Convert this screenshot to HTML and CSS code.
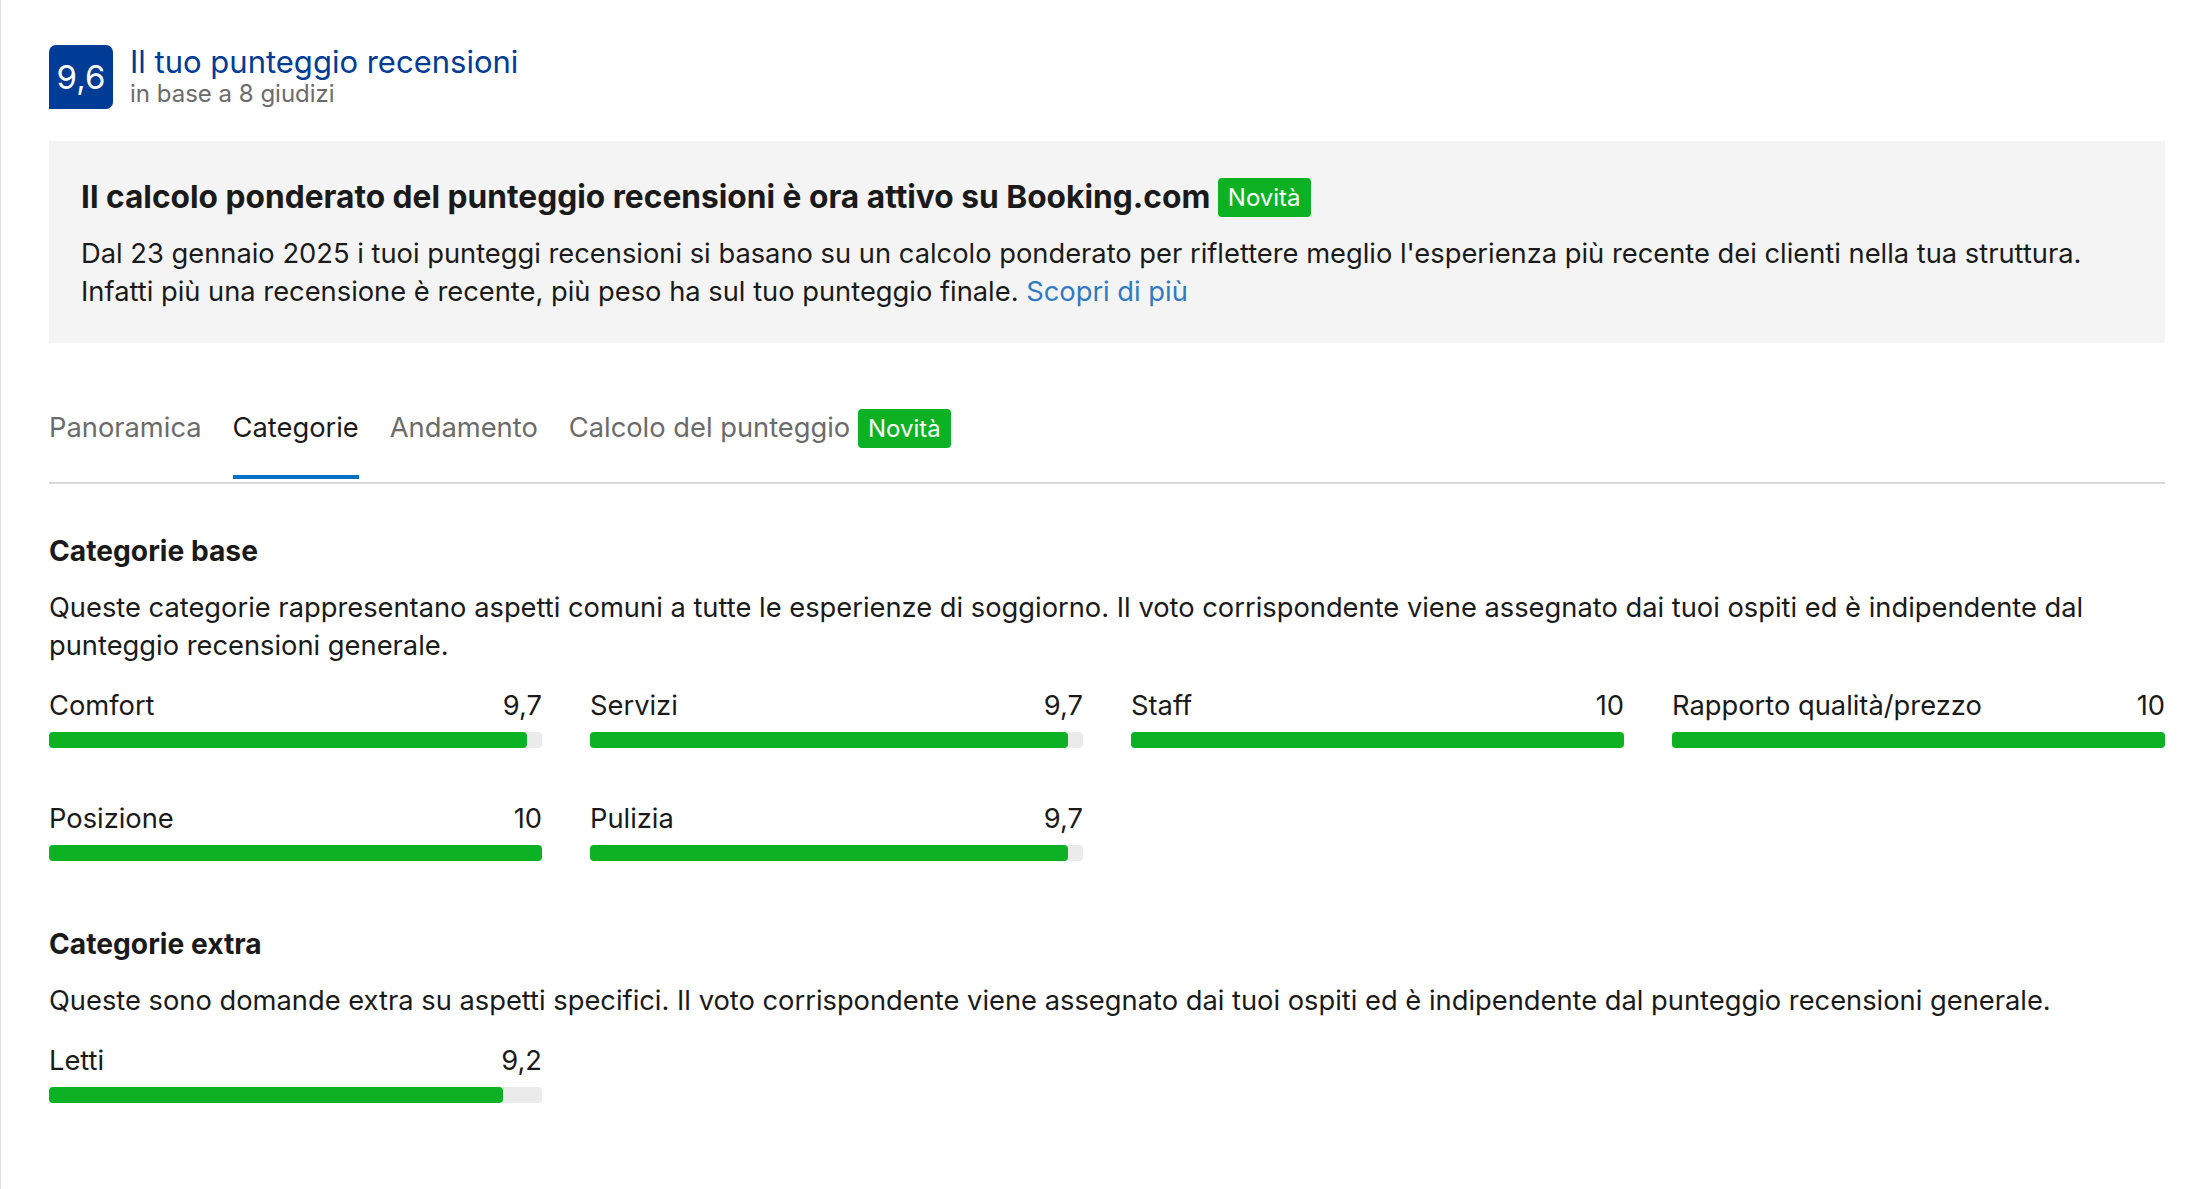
FILE: index.html
```html
<!DOCTYPE html>
<html lang="it">
<head>
    <meta charset="UTF-8">
    <title>Punteggio recensioni</title>
    <link rel="stylesheet" href="styles.css">
</head>
<body>
    <div class="page">
        <div class="score-header">
            <div class="score-badge">9,6</div>
            <div>
                <div class="score-title">Il tuo punteggio recensioni</div>
                <div class="score-sub">in base a 8 giudizi</div>
            </div>
        </div>

        <div class="notice">
            <h3>Il calcolo ponderato del punteggio recensioni è ora attivo su Booking.com <span class="tag">Novità</span></h3>
            <p>Dal 23 gennaio 2025 i tuoi punteggi recensioni si basano su un calcolo ponderato per riflettere meglio l'esperienza più recente dei clienti nella tua struttura.<br>
            Infatti più una recensione è recente, più peso ha sul tuo punteggio finale. <a href="#">Scopri di più</a></p>
        </div>

        <ul class="tabs">
            <li>Panoramica</li>
            <li class="active">Categorie</li>
            <li>Andamento</li>
            <li>Calcolo del punteggio <span class="tag">Novità</span></li>
        </ul>

        <h4 class="section-title">Categorie base</h4>
        <p class="section-text">Queste categorie rappresentano aspetti comuni a tutte le esperienze di soggiorno. Il voto corrispondente viene assegnato dai tuoi ospiti ed è indipendente dal punteggio recensioni generale.</p>
        <div class="scores">
            <div class="score">
                <div class="score-row"><span>Comfort</span><span>9,7</span></div>
                <div class="bar"><div class="fill" style="width: 97%"></div></div>
            </div>
            <div class="score">
                <div class="score-row"><span>Servizi</span><span>9,7</span></div>
                <div class="bar"><div class="fill" style="width: 97%"></div></div>
            </div>
            <div class="score">
                <div class="score-row"><span>Staff</span><span>10</span></div>
                <div class="bar"><div class="fill" style="width: 100%"></div></div>
            </div>
            <div class="score">
                <div class="score-row"><span>Rapporto qualità/prezzo</span><span>10</span></div>
                <div class="bar"><div class="fill" style="width: 100%"></div></div>
            </div>
            <div class="score">
                <div class="score-row"><span>Posizione</span><span>10</span></div>
                <div class="bar"><div class="fill" style="width: 100%"></div></div>
            </div>
            <div class="score">
                <div class="score-row"><span>Pulizia</span><span>9,7</span></div>
                <div class="bar"><div class="fill" style="width: 97%"></div></div>
            </div>
        </div>

        <h4 class="section-title extra">Categorie extra</h4>
        <p class="section-text">Queste sono domande extra su aspetti specifici. Il voto corrispondente viene assegnato dai tuoi ospiti ed è indipendente dal punteggio recensioni generale.</p>
        <div class="scores">
            <div class="score">
                <div class="score-row"><span>Letti</span><span>9,2</span></div>
                <div class="bar"><div class="fill" style="width: 92%"></div></div>
            </div>
        </div>
    </div>
</body>
</html>
```

FILE: styles.css
```css
body {
    font-family: Inter, 'Noto Sans', sans-serif;
    margin: 0;
    background-color: #fff;
    color: #1a1a1a;
    font-size: 27.3px;
    line-height: 38px;
}

.page {
    border-left: 1px solid #e2e2e2;
    padding: 45px 41px 60px 48px;
    min-height: 1100px;
}

.score-header {
    display: flex;
    align-items: flex-start;
    gap: 17px;
}

.score-badge {
    width: 64px;
    height: 64px;
    background-color: #003b95;
    color: #fff;
    border-radius: 7px 7px 7px 0;
    display: flex;
    align-items: center;
    justify-content: center;
    font-size: 33px;
}

.score-title {
    color: #003b95;
    font-size: 31px;
    line-height: 33px;
}

.score-sub {
    color: #6b6b6b;
    font-size: 24px;
    line-height: 31px;
}

.notice {
    background-color: #f4f4f4;
    margin-top: 32px;
    padding: 37px 32px 32px;
}

.notice h3 {
    margin: 0 0 18px;
    font-size: 31.7px;
    line-height: 38px;
    font-weight: 700;
}

.notice p {
    margin: 0;
}

.notice a {
    color: #2f7bc2;
    text-decoration: none;
}

.tag {
    display: inline-block;
    background-color: #0db224;
    color: #fff;
    font-size: 24px;
    font-weight: 400;
    line-height: 39px;
    padding: 0 10px;
    border-radius: 4px;
    vertical-align: top;
}

.tabs {
    list-style: none;
    margin: 66px 0 0;
    padding: 0 0 3px;
    display: flex;
    gap: 31px;
    border-bottom: 2px solid #d9d9d9;
}

.tabs li {
    color: #6b6b6b;
    padding-bottom: 27px;
    border-bottom: 4px solid transparent;
}

.tabs li.active {
    color: #1a1a1a;
    border-bottom-color: #0071c2;
}

.section-title {
    margin: 48px 0 19px;
    font-size: 28.2px;
    font-weight: 700;
}

.section-title.extra {
    margin-top: 64px;
}

.section-text {
    margin: 0 0 22px;
}

.scores {
    display: grid;
    grid-template-columns: repeat(4, 1fr);
    column-gap: 48px;
    row-gap: 52px;
}

.score-row {
    display: flex;
    justify-content: space-between;
    margin-bottom: 7px;
}

.bar {
    height: 16px;
    background-color: #ebebeb;
    border-radius: 4px;
}

.fill {
    height: 100%;
    background-color: #0db224;
    border-radius: 4px;
}
```
